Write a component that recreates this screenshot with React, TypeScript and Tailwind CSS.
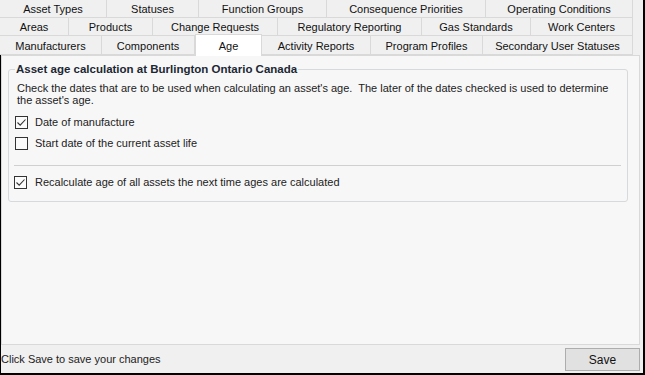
import React from "react";

type Tab = [string, number];

const rows: Tab[][] = [
  [["Asset Types", 107], ["Statuses", 92], ["Function Groups", 128], ["Consequence Priorities", 159], ["Operating Conditions", 147]],
  [["Areas", 69], ["Products", 84], ["Change Requests", 125], ["Regulatory Reporting", 144], ["Gas Standards", 109], ["Work Centers", 102]],
  [["Manufacturers", 102], ["Components", 93], ["Age", 67], ["Activity Reports", 109], ["Program Profiles", 112], ["Secondary User Statuses", 150]],
];

function Check({ checked }: { checked: boolean }) {
  return (
    <div className="w-[13px] h-[13px] border border-[#333333] bg-[#fbfbfb] flex items-center justify-center shrink-0">
      {checked && (
        <svg width="11" height="11" viewBox="0 0 11 11">
          <path d="M1.5 5.5 L4.2 8.2 L9.5 2.5" fill="none" stroke="#333" strokeWidth="1.1" />
        </svg>
      )}
    </div>
  );
}

export default function App() {
  return (
    <div
      className="w-[645px] h-[375px] bg-[#f0f0f0] border-r-2 border-b-2 border-black flex flex-col text-[11px] text-[#111]"
      style={{ fontFamily: '"Liberation Sans", Arial, sans-serif' }}
    >
      <div className="flex flex-col">
        {rows.map((row, ri) => (
          <div key={ri} className={ri === 2 ? "flex h-[19px]" : "flex h-[18px]"}>
            {row.map(([label, w]) => {
              const selected = label === "Age";
              return (
                <div
                  key={label}
                  style={{ width: w }}
                  className={
                    selected
                      ? "relative h-full"
                      : "h-full border-r border-b border-[#d9d9d9] flex items-center justify-center whitespace-nowrap pt-[2px]"
                  }
                >
                  {selected ? (
                    <div className="absolute left-0 right-0 top-[-2px] h-[22px] bg-white border-l border-r border-t border-[#d9d9d9] z-10 flex items-center justify-center pt-[1px]">
                      Age
                    </div>
                  ) : (
                    label
                  )}
                </div>
              );
            })}
          </div>
        ))}
      </div>
      <div className="flex-1 flex flex-col border-l border-black">
        <div className="flex-1 mr-[3px] border border-[#d9d9d9] bg-[#f7f7f7] pt-[13px] pl-[6px]">
          <div className="relative w-[620px] h-[133px] border border-[#d6dadd] rounded-[3px] pl-[6px]">
            <div className="absolute top-[-8px] left-[6px] px-[1px] bg-[#f7f7f7] font-bold text-[11.5px] text-[#1c2733] leading-[14px]">
              Asset age calculation at Burlington Ontario Canada
            </div>
            <div className="pt-[12px] pl-[2px] leading-[12px] text-[#222] w-[600px]">
              Check the dates that are to be used when calculating an asset's age.&nbsp; The later of the dates checked is used to determine the asset's age.
            </div>
            <div className="mt-[10px] flex items-center gap-[7px] h-[13px] text-[#222]">
              <Check checked={true} />
              <span>Date of manufacture</span>
            </div>
            <div className="mt-[8px] flex items-center gap-[7px] h-[13px] text-[#222]">
              <Check checked={false} />
              <span>Start date of the current asset life</span>
            </div>
            <div className="mt-[15px] ml-[-1px] w-[607px] h-px bg-[#d0d0d0]" />
            <div className="mt-[10px] ml-[-1px] flex items-center gap-[8px] h-[13px] text-[#222]">
              <Check checked={true} />
              <span>Recalculate age of all assets the next time ages are calculated</span>
            </div>
          </div>
        </div>
        <div className="h-[28px] flex items-center justify-between pt-[1px]">
          <span className="text-[#222]">Click Save to save your changes</span>
          <button className="w-[75px] h-[23px] mr-[3px] bg-[#e1e1e1] border border-[#adadad] text-[#111] text-[12px]">
            Save
          </button>
        </div>
      </div>
    </div>
  );
}
